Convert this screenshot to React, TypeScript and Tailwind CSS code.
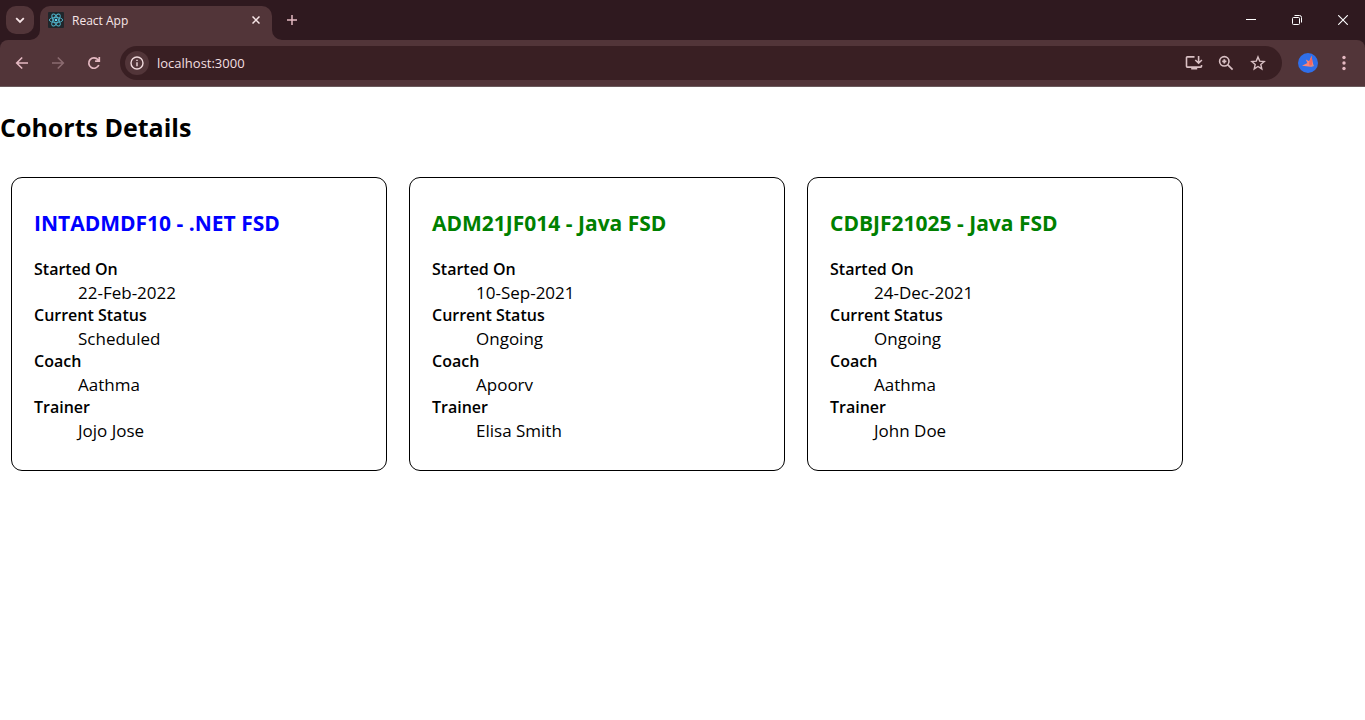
import type { ReactNode } from 'react';

type Cohort = {
  code: string;
  track: string;
  startedOn: string;
  status: string;
  coach: string;
  trainer: string;
};

const cohorts: Cohort[] = [
  { code: 'INTADMDF10', track: '.NET FSD', startedOn: '22-Feb-2022', status: 'Scheduled', coach: 'Aathma', trainer: 'Jojo Jose' },
  { code: 'ADM21JF014', track: 'Java FSD', startedOn: '10-Sep-2021', status: 'Ongoing', coach: 'Apoorv', trainer: 'Elisa Smith' },
  { code: 'CDBJF21025', track: 'Java FSD', startedOn: '24-Dec-2021', status: 'Ongoing', coach: 'Aathma', trainer: 'John Doe' },
];

function IconButton({ label, className, children }: { label: string; className: string; children: ReactNode }) {
  return (
    <button type="button" aria-label={label} className={`flex shrink-0 items-center justify-center ${className}`}>
      {children}
    </button>
  );
}

function ReactLogo() {
  return (
    <svg viewBox="0 0 16 16" className="size-4 shrink-0" aria-hidden="true">
      <rect width="16" height="16" rx="1" fill="#20262b" />
      <g fill="none" stroke="#50b5cd" strokeWidth="0.9">
        <ellipse cx="8" cy="8" rx="6.7" ry="2.6" />
        <ellipse cx="8" cy="8" rx="6.7" ry="2.6" transform="rotate(60 8 8)" />
        <ellipse cx="8" cy="8" rx="6.7" ry="2.6" transform="rotate(120 8 8)" />
      </g>
      <circle cx="8" cy="8" r="1.3" fill="#61dafb" />
    </svg>
  );
}

function TabStrip() {
  return (
    <div className="flex h-10 items-start bg-[#2f191f]">
      <IconButton label="Search tabs" className="mt-[6px] ml-[6px] size-7 rounded-[10px] bg-[#523539] text-[#f8e6e8]">
        <svg viewBox="0 0 10 10" className="size-[10px]" fill="none" stroke="currentColor" strokeWidth="1.8">
          <path d="M1.2 3.2 5 7l3.8-3.8" />
        </svg>
      </IconButton>
      <div className="relative mt-[6px] ml-[6px] flex h-[34px] w-[232px] items-center rounded-t-[10px] bg-[#523539] pb-[6px] pl-2">
        <svg viewBox="0 0 10 10" className="absolute bottom-0 -left-[10px] size-[10px]" fill="#523539" aria-hidden="true">
          <path d="M10 0v10H0A10 10 0 0 0 10 0Z" />
        </svg>
        <svg viewBox="0 0 10 10" className="absolute -right-[10px] bottom-0 size-[10px]" fill="#523539" aria-hidden="true">
          <path d="M0 0v10h10A10 10 0 0 1 0 0Z" />
        </svg>
        <ReactLogo />
        <span className="ml-2 flex-1 pt-px text-[12px] leading-4 text-[#f8e6e8]">React App</span>
        <IconButton label="Close tab" className="mr-2 size-4 text-[#f8e6e8]">
          <svg viewBox="0 0 8 8" className="size-2" fill="none" stroke="currentColor" strokeWidth="1.5">
            <path d="m.5.5 7 7M7.5.5l-7 7" />
          </svg>
        </IconButton>
      </div>
      <IconButton label="New tab" className="mt-[6px] ml-[6px] size-7 text-[#e5b9c2]">
        <svg viewBox="0 0 10 10" className="size-[10px]" fill="none" stroke="currentColor" strokeWidth="1.5">
          <path d="M5 0v10M0 5h10" />
        </svg>
      </IconButton>
      <div className="ml-auto flex h-10 text-white">
        <IconButton label="Minimize" className="w-[46px]">
          <svg viewBox="0 0 10 10" className="size-[10px]" stroke="currentColor">
            <path d="M0 4.5h10" />
          </svg>
        </IconButton>
        <IconButton label="Restore" className="w-[46px]">
          <svg viewBox="0 0 10 10" className="size-[10px]" fill="none" stroke="currentColor">
            <rect x=".5" y="2.5" width="7" height="7" rx="1" />
            <path d="M2.5.5h5a2 2 0 0 1 2 2v5" />
          </svg>
        </IconButton>
        <IconButton label="Close" className="w-[45px]">
          <svg viewBox="0 0 10 10" className="size-[10px]" fill="none" stroke="currentColor" strokeWidth="1.1">
            <path d="m.2.2 9.6 9.6M9.8.2.2 9.8" />
          </svg>
        </IconButton>
      </div>
    </div>
  );
}

function Toolbar() {
  return (
    <div className="bg-[#2f191f]">
      <div className="flex h-[47px] items-center rounded-t-[8px] border-b border-[#6a5a5c] bg-[#523539] pr-[7px] pl-2 text-[#e5b9c2]">
        <div className="flex gap-2">
          <IconButton label="Back" className="size-7">
            <svg viewBox="0 0 16 16" className="size-4" fill="none" stroke="currentColor" strokeWidth="1.6">
              <path d="M14 8H3M8.2 2.5 2.7 8l5.5 5.5" />
            </svg>
          </IconButton>
          <IconButton label="Forward" className="size-7 text-[#8b6b70]">
            <svg viewBox="0 0 16 16" className="size-4" fill="none" stroke="currentColor" strokeWidth="1.6">
              <path d="M2 8h11M7.8 2.5 13.3 8l-5.5 5.5" />
            </svg>
          </IconButton>
          <IconButton label="Reload" className="size-7">
            <svg viewBox="0 0 16 16" className="size-4" fill="none" stroke="currentColor" strokeWidth="1.7">
              <path d="M12.8 10A5.2 5.2 0 1 1 12 4.7L13.3 6M13.3 2v4.2H9.1" />
            </svg>
          </IconButton>
        </div>
        <div className="mr-4 ml-3 flex h-[34px] flex-1 items-center rounded-full bg-[#391f23] pr-2 pl-[5px] text-[#d9c0c4]">
          <IconButton label="View site information" className="size-6 rounded-full bg-[#523539] text-[#f0dadd]">
            <svg viewBox="0 0 14 14" className="size-[14px]" fill="none" stroke="currentColor" strokeWidth="1.4">
              <circle cx="7" cy="7" r="6" />
              <path d="M7 6.2v4M7 3.7v1.4" />
            </svg>
          </IconButton>
          <input
            type="text"
            aria-label="Address and search bar"
            defaultValue="localhost:3000"
            className="ml-2 min-w-0 flex-1 bg-transparent text-[13px] leading-5 text-[#f3dfe0] outline-none"
          />
          <IconButton label="Install app" className="size-8">
            <svg viewBox="0 0 18 16" className="h-4 w-[18px]" fill="none" stroke="currentColor" strokeWidth="1.6">
              <path d="M9.5 1.9H2.3a.8.8 0 0 0-.8.8v8.6c0 .4.3.8.8.8h13.4c.4 0 .8-.4.8-.8V10M13.6 1v7M10.3 5l3.3 3.2L16.9 5" />
              <path d="M6.2 13.5h6" strokeWidth="2" />
            </svg>
          </IconButton>
          <IconButton label="Zoom" className="size-8">
            <svg viewBox="0 0 16 16" className="size-4" fill="none" stroke="currentColor" strokeWidth="1.6">
              <circle cx="6.3" cy="6.3" r="4.7" />
              <path d="m9.6 9.6 5 5" />
              <path d="M6.3 4.2v4.2M4.2 6.3h4.2" strokeWidth="1.8" />
            </svg>
          </IconButton>
          <IconButton label="Bookmark this tab" className="size-8">
            <svg viewBox="0 0 16 16" className="size-4" fill="none" stroke="currentColor" strokeWidth="1.4">
              <path d="m8 1.9 1.7 4.2 4.5.4-3.4 3 1 4.4L8 11.5l-3.8 2.4 1-4.4-3.4-3 4.5-.4Z" />
            </svg>
          </IconButton>
        </div>
        <IconButton label="Profile" className="size-5">
          <svg viewBox="0 0 20 20" className="size-5">
            <circle cx="10" cy="10" r="10" fill="#2f6fea" />
            <path d="M4 12.8 9.4 10 7.8 6.6l3.4 1.6 2.4-5.4.8 5.2 1 4.2-2.8 1.6Z" fill="#fb8476" />
            <path d="m10.8 10 2.800-7 .7 5-.5 4-2 1Z" fill="#f3655e" />
            <path d="m12.2 12.400 3-.8.8 1.500-2.600 1Z" fill="#c98a90" />
          </svg>
        </IconButton>
        <IconButton label="Customize and control" className="ml-3 size-7">
          <svg viewBox="0 0 4 16" className="h-4 w-1" fill="currentColor">
            <circle cx="2" cy="2.5" r="1.7" />
            <circle cx="2" cy="8" r="1.7" />
            <circle cx="2" cy="13.5" r="1.7" />
          </svg>
        </IconButton>
      </div>
    </div>
  );
}

function CohortCard({ cohort }: { cohort: Cohort }) {
  const rows = [
    ['Started On', cohort.startedOn],
    ['Current Status', cohort.status],
    ['Coach', cohort.coach],
    ['Trainer', cohort.trainer],
  ];
  return (
    <article className="w-[376px] rounded-[11px] border border-black px-[22px] pt-[31px] pb-7">
      <h3 className={`text-[21px] leading-7 font-bold ${cohort.status === 'Ongoing' ? 'text-[#008000]' : 'text-[#0000ff]'}`}>
        {cohort.code} - {cohort.track}
      </h3>
      <dl className="mt-[21px]">
        {rows.map(([term, value]) => (
          <div key={term}>
            <dt className="text-[16px] leading-[23px] font-semibold">{term}</dt>
            <dd className="pl-11 text-[17px] leading-[23px]">{value}</dd>
          </div>
        ))}
      </dl>
    </article>
  );
}

export default function App() {
  return (
    <div className="min-h-screen bg-white font-['Segoe_UI','Open_Sans','Noto_Sans',sans-serif] text-black">
      <header>
        <TabStrip />
        <Toolbar />
      </header>
      <main>
        <h2 className="pt-[22px] text-[25px] leading-9 font-bold">Cohorts Details</h2>
        <div className="mt-8 flex flex-wrap gap-[22px] px-[11px]">
          {cohorts.map((cohort) => (
            <CohortCard key={cohort.code} cohort={cohort} />
          ))}
        </div>
      </main>
    </div>
  );
}
